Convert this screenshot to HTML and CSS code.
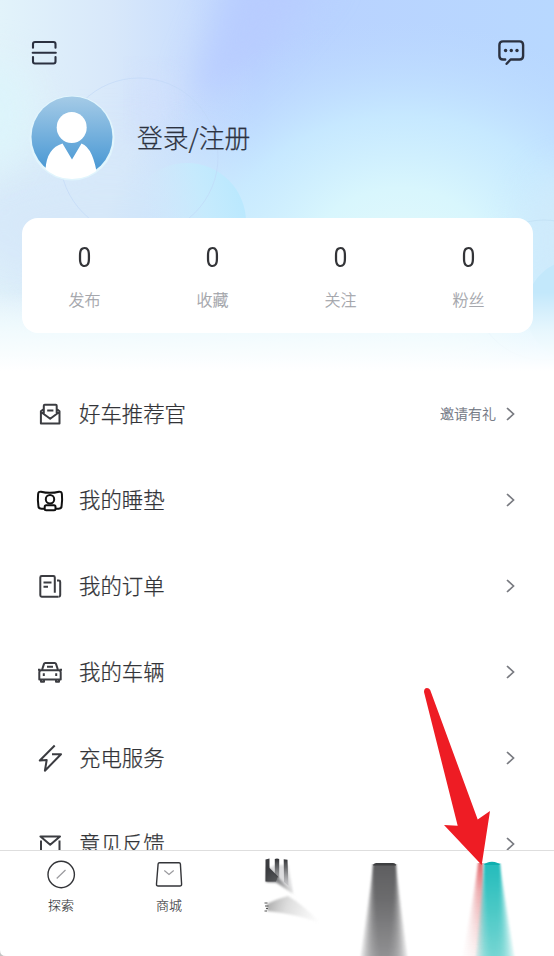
FILE: index.html
```html
<!DOCTYPE html>
<html lang="zh-CN">
<head>
<meta charset="utf-8">
<title>我的</title>
<link rel="stylesheet" href="styles.css">
</head>
<body>
<main class="app">
  <header class="hero">
    <svg class="hero-bg" viewBox="0 0 554 371" preserveAspectRatio="none" aria-hidden="true">
      <defs>
        <linearGradient id="base" x1="0" y1="0" x2="1" y2="0">
          <stop offset="0" stop-color="#e2f3fa"/><stop offset=".2" stop-color="#d8e8fa"/><stop offset=".34" stop-color="#cadefd"/><stop offset=".46" stop-color="#b9d1ff"/><stop offset="1" stop-color="#b8d8ff"/>
        </linearGradient>
        <radialGradient id="glow" gradientUnits="userSpaceOnUse" cx="0" cy="0" r="1" gradientTransform="translate(400 260) scale(300 240)">
          <stop offset="0" stop-color="#e2f9fb"/><stop offset=".3" stop-color="#d8f6fd"/><stop offset=".6" stop-color="#c9ecff" stop-opacity=".85"/><stop offset="1" stop-color="#bddaff" stop-opacity="0"/>
        </radialGradient>
        <linearGradient id="ball" x1="1" y1=".3" x2="0" y2=".6">
          <stop offset="0" stop-color="#b9e8fe"/><stop offset=".35" stop-color="#c5ebfd" stop-opacity=".85"/><stop offset=".8" stop-color="#d3e9fa" stop-opacity="0"/>
        </linearGradient>
        <linearGradient id="fade" x1="0" y1="0" x2="0" y2="1">
          <stop offset="0" stop-color="#fff" stop-opacity="0"/><stop offset=".5" stop-color="#fbffff" stop-opacity=".65"/><stop offset="1" stop-color="#fff"/>
        </linearGradient>
        <filter id="b30" x="-60%" y="-60%" width="220%" height="220%" color-interpolation-filters="sRGB"><feGaussianBlur stdDeviation="26"/></filter>
        <filter id="b14" x="-60%" y="-60%" width="220%" height="220%" color-interpolation-filters="sRGB"><feGaussianBlur stdDeviation="18"/></filter>
      </defs>
      <rect width="554" height="371" fill="url(#base)"/>
      <path d="M240-30L330-30 260 60 210 105 195 85z" fill="#b8ccff" filter="url(#b14)"/>
      <ellipse cx="110" cy="225" rx="160" ry="75" fill="#d6e8f9" filter="url(#b30)"/>
      <ellipse cx="-5" cy="115" rx="38" ry="55" fill="#dcf4fb" filter="url(#b14)"/>
      <path d="M140 80h28v40h-28z" fill="#d2dffc" filter="url(#b14)"/>
      <rect width="554" height="371" fill="url(#glow)"/>
      <ellipse cx="570" cy="240" rx="45" ry="70" fill="#cfeafb" filter="url(#b14)"/>
      <ellipse cx="180" cy="345" rx="330" ry="38" fill="#dff3fb" filter="url(#b14)"/>
      <circle cx="187" cy="222" r="59" fill="url(#ball)"/>
      <circle cx="139" cy="157" r="79" fill="none" stroke="#bfd7f7" stroke-width="1" opacity=".6"/>
      <circle cx="577" cy="310" r="51" fill="#c3e8fb"/>
      <circle cx="544" cy="290" r="70" fill="none" stroke="#bddcf2" opacity=".6"/>
      <rect y="292" width="554" height="79" fill="url(#fade)"/>
    </svg>
    <div class="topbar">
      <svg width="28" height="26" viewBox="0 0 28 26" class="ic top"><path d="M3 7.800V4q0-2 2-2H23.500q2 0 2 2V7.800M2.700 12.800H25.800M3 17V21.500q0 2 2 2H23.500q2 0 2-2V17"/></svg>
      <svg width="28" height="28" viewBox="0 0 28 28" class="ic msg"><path d="M8.200 21.500H6q-3.600 0-3.600-3.600V7Q2.400 3.400 6 3.400H22.500q3.600 0 3.600 3.600V17.900Q26.100 21.500 22.500 21.500H13.600L9.600 25.800"/><g class="dots"><circle cx="8.600" cy="12.500" r="1.700"/><circle cx="14.300" cy="12.500" r="1.700"/><circle cx="20" cy="12.500" r="1.700"/></g></svg>
    </div>
    <div class="profile">
      <svg width="86" height="86" viewBox="0 0 86 86">
        <defs><linearGradient id="av" x1="0" y1="0" x2="0" y2="1"><stop offset="0" stop-color="#a5cbe7"/><stop offset=".85" stop-color="#4e9bd5"/></linearGradient><clipPath id="avc"><circle cx="43" cy="43" r="41"/></clipPath></defs>
        <circle cx="43" cy="43" r="42.500" fill="#e1f5fd"/>
        <circle cx="43" cy="42" r="40.500" fill="url(#av)"/>
        <g clip-path="url(#avc)" fill="#fff"><ellipse cx="42.700" cy="32.500" rx="15" ry="15.600"/><path d="M16.500 86V74Q18 53 33.500 48.500L43 64.500 52.500 48.500Q65 53 69 86z"/></g>
      </svg>
      <span class="login">登录/注册</span>
    </div>
    <section class="stats">
      <div class="stat"><b>0</b><span>发布</span></div>
      <div class="stat"><b>0</b><span>收藏</span></div>
      <div class="stat"><b>0</b><span>关注</span></div>
      <div class="stat"><b>0</b><span>粉丝</span></div>
    </section>
  </header>

  <section class="list">
    <div class="row"><svg class="ic" width="28" height="28" viewBox="0 0 28 28"><path d="M7.800 14V5.700q0-.9.900-.9H19.800q.9 0 .9.900V14M7.500 9.200L4.900 11.300V23.500H23.500V11.300L21 9.200M5 12L14.200 18.700 23.300 12M11.200 10.600H17.400"/></svg><span class="name">好车推荐官</span><span class="note">邀请有礼</span><svg class="chev" width="10" height="14" viewBox="0 0 10 14"><path d="M2 1L8.500 7 2 13"/></svg></div>
    <div class="row"><svg class="ic black" width="28" height="28" viewBox="0 0 28 28"><path d="M8 22.800H5.500Q2.400 22.800 2.400 20 1.500 14.500 2.100 8.100 2.500 5.300 5 5.700 14 8 23 5.700 25.500 5.300 25.900 8.100 26.500 14.500 25.600 20 25.600 22.800 22.500 22.800H20"/><circle cx="14" cy="13.300" r="4.200"/><rect x="8.700" y="19.200" width="10.800" height="5" rx="1.500"/></svg><span class="name">我的睡垫</span><svg class="chev" width="10" height="14" viewBox="0 0 10 14"><path d="M2 1L8.500 7 2 13"/></svg></div>
    <div class="row"><svg class="ic" width="28" height="28" viewBox="0 0 28 28"><path d="M22.500 24.700H5.700q-1.400 0-1.400-1.400V5.400q0-1.400 1.400-1.400H17.400q1.400 0 1.400 1.400V20.700M21 8.600H22.800q1.400 0 1.400 1.400V23.300q0 1.400-1.400 1.400M7.500 10.500H15.500M7.500 14.800H12"/></svg><span class="name">我的订单</span><svg class="chev" width="10" height="14" viewBox="0 0 10 14"><path d="M2 1L8.500 7 2 13"/></svg></div>
    <div class="row"><svg class="ic" width="28" height="28" viewBox="0 0 28 28"><path d="M6 12L8 5.900q.3-.9 1.200-.9H18.800q.9 0 1.200.9L22 12M2 11.700H4.500M23.500 11.700H26M5.500 12.300H22.500q2.200 0 2.200 2.200V21.500H3.300V14.500q0-2.200 2.200-2.200zM5 21.500V23.800H8V21.500M20 21.500V23.800H23V21.500M11 8.700H17M7.800 15.300V18M20.200 15.300V18"/></svg><span class="name">我的车辆</span><svg class="chev" width="10" height="14" viewBox="0 0 10 14"><path d="M2 1L8.500 7 2 13"/></svg></div>
    <div class="row"><svg class="ic" width="28" height="28" viewBox="0 0 28 28"><path d="M18.700 1.500L3.800 16.500 10.700 16 8.900 26.700 25 10.300H16"/></svg><span class="name">充电服务</span><svg class="chev" width="10" height="14" viewBox="0 0 10 14"><path d="M2 1L8.500 7 2 13"/></svg></div>
    <div class="row"><svg class="ic" width="28" height="28" viewBox="0 0 28 28"><path d="M5 23V10.500M23.500 23V10.500M5 23H23.500M4.500 6.500H24L14.200 14.700z"/></svg><span class="name">意见反馈</span><svg class="chev" width="10" height="14" viewBox="0 0 10 14"><path d="M2 1L8.500 7 2 13"/></svg></div>
  </section>

  <nav class="tabs">
    <div class="tab"><svg width="30" height="30" viewBox="0 0 30 30" class="tic"><circle cx="15.200" cy="15.500" r="13.200"/><path class="thin" d="M10.700 19.500L19.500 11"/></svg><span>探索</span></div>
    <div class="tab"><svg width="30" height="30" viewBox="0 0 30 30" class="tic"><path d="M5.500 3.700H25q1.300 0 1.400 1.300L27.600 25Q27.700 27 25.800 27H4.200Q2.300 27 2.500 25L4.100 5Q4.200 3.700 5.500 3.700z"/><path class="thin" d="M10.300 11.500L15 15.400 19.700 11.500"/></svg><span>商城</span></div>
    <svg class="smears" viewBox="0 0 314 105" width="314" height="105">
      <defs>
        <linearGradient id="s1" gradientUnits="userSpaceOnUse" x1="0" y1="8" x2="0" y2="36"><stop offset="0" stop-color="#303134"/><stop offset=".3" stop-color="#505154" stop-opacity=".85"/><stop offset="1" stop-color="#808184" stop-opacity=".15"/></linearGradient>
        <linearGradient id="s2" gradientUnits="userSpaceOnUse" x1="27" y1="54" x2="80" y2="70"><stop offset="0" stop-color="#777" stop-opacity=".6"/><stop offset=".35" stop-color="#aaa" stop-opacity=".4"/><stop offset="1" stop-color="#bbb" stop-opacity="0"/></linearGradient>
        <linearGradient id="s3" gradientUnits="userSpaceOnUse" x1="0" y1="12" x2="0" y2="105"><stop offset="0" stop-color="#4d4d4f"/><stop offset=".4" stop-color="#5e5e60"/><stop offset="1" stop-color="#868688"/></linearGradient>
        <linearGradient id="s4" gradientUnits="userSpaceOnUse" x1="0" y1="12" x2="0" y2="105"><stop offset="0" stop-color="#12b7b7"/><stop offset=".5" stop-color="#3cc4c1"/><stop offset="1" stop-color="#6ad2cf"/></linearGradient>
        <linearGradient id="s5" gradientUnits="userSpaceOnUse" x1="0" y1="12" x2="0" y2="105"><stop offset="0" stop-color="#e0484e"/><stop offset=".3" stop-color="#e0777b" stop-opacity=".6"/><stop offset="1" stop-color="#f0d0d0" stop-opacity=".25"/></linearGradient>
        <linearGradient id="wedge" gradientUnits="userSpaceOnUse" x1="26" y1="16" x2="56" y2="46"><stop offset="0" stop-color="#333437"/><stop offset=".35" stop-color="#555659" stop-opacity=".85"/><stop offset="1" stop-color="#bbb" stop-opacity="0"/></linearGradient>
        <filter id="f1" x="-30%" y="-30%" width="160%" height="160%" color-interpolation-filters="sRGB"><feGaussianBlur stdDeviation=".9"/></filter>
        <filter id="f2" x="-30%" y="0" width="160%" height="100%" color-interpolation-filters="sRGB"><feGaussianBlur stdDeviation="1.200 0"/></filter>
      </defs>
      <path d="M30 17L34.800 14 48 14 53 42 40 33z" fill="#a0a1a4" opacity=".35" filter="url(#f1)"/>
      <g fill="url(#s1)">
        <path d="M34.800 8Q37 6.800 39.200 8V28L34.800 24zM43.700 8.300L47.500 8.800 48.500 35 44 31z"/>
      </g>
      <path d="M25.500 8.500L29.500 7.500V17L38 25.500 36 30.500H25.500z" fill="#3c3d40"/>
      <path d="M27 15L57 46 36 31.500 26 31z" fill="url(#wedge)" filter="url(#f1)"/>
      <path d="M27 53Q34 49 48 45Q62 53 82 73 58 63 27 60z" fill="url(#s2)" filter="url(#f1)"/>
      <path d="M24.500 52h3M25 55h3.500M26 57.500h2M24.500 60h2.500" stroke="#555"/>
      <g fill="url(#s3)" fill-opacity=".26" filter="url(#f2)">
        <path d="M133 13H156L167 105H121z"/><path d="M133 13H156L164 105H124z"/><path d="M133 13H156L161.500 105H126.500z"/><path d="M133 13H156L159 105H129z"/><path d="M133 13H156L156.500 105H131.500z"/><path d="M133 13H156L154 105H134z"/><path d="M133 13H156L151.500 105H136.500z"/><path d="M133 13H156L149 105H139z"/>
      </g>
      <g fill="url(#s5)" fill-opacity=".35" filter="url(#f2)">
        <path d="M238 12H243L249 105H223z"/><path d="M238 12H243L246 105H227z"/><path d="M238 12H243L243 105H231z"/><path d="M239 12H243L241 105H235z"/>
      </g>
      <g fill="url(#s4)" fill-opacity=".28" filter="url(#f2)">
        <path d="M244 12.500H260L274 105H236z"/><path d="M244 12.500H260L271 105H238.500z"/><path d="M244 12.500H260L268.500 105H241z"/><path d="M244 12.500H260L266 105H243z"/><path d="M244 12.500H260L264 105H245z"/><path d="M244 12.500H260L262 105H247z"/><path d="M244 12.500H260L260 105H249z"/><path d="M244 12.500H260L257 105H251z"/>
      </g>
      <path d="M133 14.500Q133.500 12 136 12H153Q156 12 156 14.500z" fill="#3e3f41"/>
      <path d="M244 14Q246 11 252 10.800Q258 11 260 14z" fill="#0fafaf"/>
    </svg>
  </nav>

  <svg class="arrow" width="72" height="182" viewBox="0 0 72 182"><path d="M9.200 5Q8 3 6 3Q3 3.200 3 7L36.700 140.700 23 140 60.700 180 69 126 56.700 134.500z" fill="#ee1c24"/></svg>
  <svg class="corner" width="6" height="6" viewBox="0 0 6 6"><path d="M0 0Q0 6 6 6H0z" fill="#c4c4c4"/></svg>
</main>
</body>
</html>
```

FILE: styles.css
```css
* { box-sizing: border-box; }
body {
  margin: 0;
  background: #fff;
  color: #333438;
  font-family: "Noto Sans CJK SC", "Noto Sans", sans-serif;
  font-weight: 300;
  -webkit-text-stroke: .25px currentColor;
}
.app {
  position: relative;
  display: flex;
  flex-direction: column;
  width: 554px;
  height: 956px;
  overflow: hidden;
}
svg { display: block; flex: none; }
.ic { fill: none; stroke: #3b3c41; stroke-width: 2; stroke-linejoin: round; }
.ic.top, .ic.msg { stroke: #2b3140; stroke-width: 2.1; stroke-linecap: round; }
.ic.msg { stroke-width: 2.4; }
.ic.black { stroke: #111; }
.dots { fill: #2b3140; stroke: none; }

.hero { position: relative; flex: none; height: 371px; }
.hero-bg { position: absolute; inset: 0; width: 554px; height: 371px; }
.topbar {
  position: relative;
  display: flex;
  justify-content: space-between;
  align-items: flex-end;
  height: 66px;
  padding: 0 29px 0 30px;
}
.profile {
  position: relative;
  display: flex;
  align-items: center;
  gap: 22px;
  height: 86px;
  margin: 29px 0 0 29px;
}
.login { padding-bottom: 2px; font-size: 25.8px; line-height: 38px; color: #2c3240; }
.stats {
  position: relative;
  display: grid;
  grid-template-columns: repeat(4, 128px);
  justify-content: center;
  width: 511px;
  height: 115px;
  margin: 37px 0 0 21.5px;
  padding: 24px 1px 0 0;
  border-radius: 16px;
  background: #fff;
}
.stat { display: flex; flex-direction: column; align-items: center; }
.stat b { font: 400 27px/32px Roboto, sans-serif; color: #333438; transform: scaleX(.92); -webkit-text-stroke: 0; }
.stat span { margin-top: 13px; font-size: 16px; line-height: 24px; color: #a0a2a8; }

.list { flex: none; height: 479px; overflow: hidden; }
.row { display: flex; align-items: center; height: 86px; padding: 0 39px 0 36px; }
.name { flex: 1; margin-left: 15px; padding-bottom: 2px; font-size: 21.4px; line-height: 32px; }
.note { margin-right: 9px; padding-bottom: 2px; font-size: 14px; line-height: 20px; color: #6d727d; }
.chev { fill: none; stroke: #787a80; stroke-width: 1.7; }

.tabs {
  position: relative;
  flex: none;
  display: flex;
  height: 106px;
  padding-left: 7px;
  border-top: 1px solid #dedede;
  background: #fff;
}
.tab { display: flex; flex-direction: column; align-items: center; width: 108px; padding-top: 8px; }
.tab span { margin-top: 6px; font-size: 13px; line-height: 20px; -webkit-text-stroke-width: .1px; }
.tic { fill: none; stroke: #333438; stroke-width: 1.4; }
.tic .thin { stroke: #9a9a9e; stroke-width: 1.2; }
.smears { margin-left: 17px; }
.arrow { position: absolute; left: 421px; top: 685px; }
.corner { position: absolute; left: 0; bottom: 0; }
```
